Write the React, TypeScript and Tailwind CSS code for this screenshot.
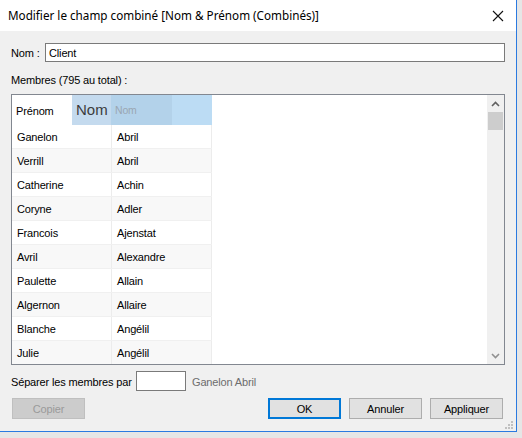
import React from "react";

const rows: [string, string][] = [
  ["Ganelon", "Abril"],
  ["Verrill", "Abril"],
  ["Catherine", "Achin"],
  ["Coryne", "Adler"],
  ["Francois", "Ajenstat"],
  ["Avril", "Alexandre"],
  ["Paulette", "Allain"],
  ["Algernon", "Allaire"],
  ["Blanche", "Angélil"],
  ["Julie", "Angélil"],
];

export default function App() {
  return (
    <div
      className="w-[522px] h-[438px] bg-[#e6e6e6] overflow-hidden text-[11px] text-[#000] tracking-[-0.15px]"
      style={{ fontFamily: '"Liberation Sans", Arial, sans-serif' }}
    >
      <div className="w-[517px] h-[432px] border-r border-b border-[#2b7ae0] bg-[#f0f0f0] flex flex-col">
        {/* title bar */}
        <div className="h-[31px] bg-white flex items-center justify-between pl-[8px] pr-[12px] shrink-0">
          <span
            className="text-[11.7px] leading-none tracking-normal"
            style={{ fontFamily: '"Noto Sans", "Open Sans", sans-serif' }}
          >
            Modifier le champ combiné [Nom &amp; Prénom (Combinés)]
          </span>
          <svg width="12" height="12" viewBox="0 0 12 12">
            <path d="M1 1 L11 11 M11 1 L1 11" stroke="#111" strokeWidth="1.1" />
          </svg>
        </div>
        {/* body */}
        <div className="flex flex-col pl-[11px] pr-[11px] pt-[12px]">
          <div className="flex items-center h-[19px]">
            <span className="w-[34px] pt-[2px]">Nom :</span>
            <div className="flex-1 h-[19px] border border-[#7a7a7a] bg-white flex items-center pl-[3px] pt-[2px]">
              Client
            </div>
          </div>
          <div className="mt-[9px] h-[16px] leading-[16px] pt-[1px]">Membres (795 au total) :</div>
          <div className="mt-[7px] h-[271px] border border-[#828790] bg-white flex overflow-hidden">
            <div className="flex-1 flex flex-col overflow-hidden">
              {/* header */}
              <div className="flex h-[30px] shrink-0">
                <div className="w-[60px] pl-[4px] pt-[2px] flex items-center">Prénom</div>
                <div className="w-[39px] bg-[#c4daee] flex items-center pl-[4px] text-[15px] text-[#3c3c3c] tracking-normal">
                  Nom
                </div>
                <div className="w-[61px] bg-[#b3d2ea] flex items-center pl-[4px] pt-[2px] text-[10.5px] text-[#9aa6b2]">
                  Nom
                </div>
                <div className="w-[40px] bg-[#bcdcf4]" />
              </div>
              {rows.map(([a, b], i) => (
                <div
                  key={i}
                  className={`flex h-[24px] shrink-0 w-[200px] border-b border-[#f0f0f0] ${
                    i % 2 === 1 ? "bg-[#f8f8f8]" : "bg-white"
                  }`}
                >
                  <div className="w-[100px] pl-[5px] pt-[2px] flex items-center border-r border-[#ececec]">{a}</div>
                  <div className="w-[100px] pl-[5px] pt-[2px] flex items-center border-r border-[#ececec]">{b}</div>
                </div>
              ))}
            </div>
            {/* scrollbar */}
            <div className="w-[17px] bg-[#f0f0f0] flex flex-col items-center shrink-0">
              <div className="h-[17px] flex items-center justify-center">
                <svg width="9" height="6" viewBox="0 0 9 6">
                  <path d="M1 5 L4.5 1.5 L8 5" stroke="#606060" strokeWidth="1.6" fill="none" />
                </svg>
              </div>
              <div className="w-[15px] h-[18px] bg-[#cdcdcd]" />
              <div className="flex-1" />
              <div className="h-[17px] flex items-center justify-center">
                <svg width="9" height="6" viewBox="0 0 9 6">
                  <path d="M1 1 L4.5 4.5 L8 1" stroke="#909090" strokeWidth="1.6" fill="none" />
                </svg>
              </div>
            </div>
          </div>
          <div className="mt-[6px] flex items-center h-[20px]">
            <span className="w-[125px] pt-[2px]">Séparer les membres par</span>
            <div className="w-[50px] h-[20px] border border-[#7a7a7a] bg-white" />
            <span className="ml-[6px] pt-[2px] text-[#6d6d6d]">Ganelon Abril</span>
          </div>
          <div className="mt-[7px] flex items-center h-[21px]">
            <div className="ml-[1px] w-[73px] h-[21px] bg-[#cccccc] border border-[#bfbfbf] flex items-center justify-center pt-[2px] text-[#9a9a9a]">
              Copier
            </div>
            <div className="flex-1" />
            <div className="w-[73px] h-[21px] bg-[#e1e1e1] border-2 border-[#0078d7] flex items-center justify-center pt-[2px]">
              OK
            </div>
            <div className="ml-[8px] w-[73px] h-[21px] bg-[#e1e1e1] border border-[#adadad] flex items-center justify-center pt-[2px]">
              Annuler
            </div>
            <div className="ml-[8px] w-[73px] h-[21px] bg-[#e1e1e1] border border-[#adadad] flex items-center justify-center pt-[2px] mr-[2px]">
              Appliquer
            </div>
          </div>
        </div>
        <div className="flex-1 flex justify-end items-end pr-[3px] pb-[2px]">
          <svg width="8" height="8" viewBox="0 0 8 8">
            <rect x="6" y="0" width="2" height="2" fill="#c0c0c0" />
            <rect x="3" y="3" width="2" height="2" fill="#c0c0c0" />
            <rect x="6" y="3" width="2" height="2" fill="#c0c0c0" />
            <rect x="0" y="6" width="2" height="2" fill="#c0c0c0" />
            <rect x="3" y="6" width="2" height="2" fill="#c0c0c0" />
            <rect x="6" y="6" width="2" height="2" fill="#c0c0c0" />
          </svg>
        </div>
      </div>
    </div>
  );
}
